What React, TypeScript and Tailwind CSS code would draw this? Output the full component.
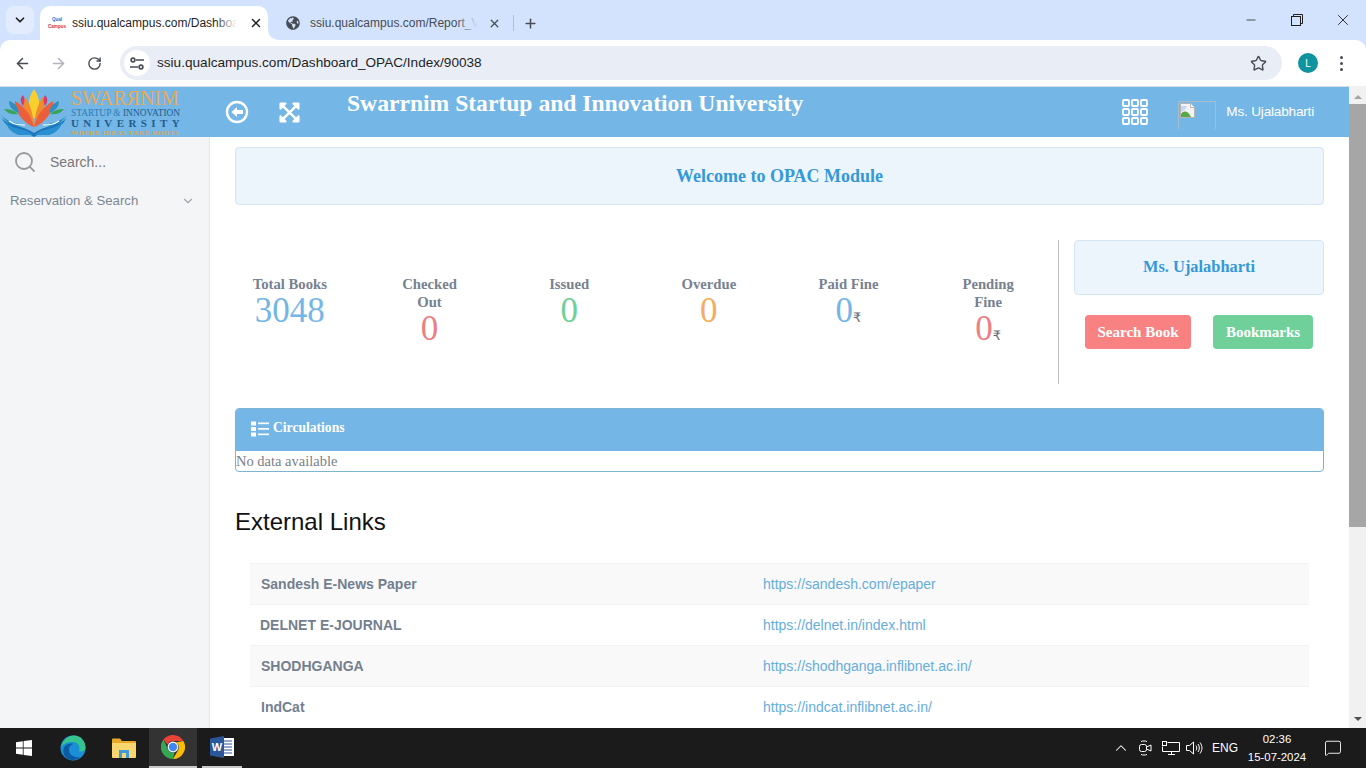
import React from "react";
import { ArrowLeft, ArrowRight, RotateCw, Star, X, Plus, ChevronDown, Search, Minus, ChevronUp, MessageSquare } from "lucide-react";
import { FaExpandArrowsAlt, FaGlobeAmericas } from "react-icons/fa";

const serif = "font-['Liberation_Serif',serif]";

function Lotus() {
  return (
    <svg width="68" height="50" viewBox="1 0 64 50" className="shrink-0">
      <path d="M0 28 C8 36 16 36 22 38 C14 42 8 38 0 28Z" fill="#1e8ecb" />
      <path d="M66 28 C58 36 50 36 44 38 C52 42 58 38 66 28Z" fill="#1e8ecb" />
      <path d="M1 31 C6 44 20 42 33 50 C46 42 60 44 65 31 C58 40 44 38 33 46 C22 38 8 40 1 31Z" fill="#1c75b8" />
      <path d="M4 34 C12 44 24 40 32 48 L18 48 C10 46 6 40 4 34Z" fill="#2a8fd0" />
      <path d="M62 34 C54 44 42 40 34 48 L48 48 C56 46 60 40 62 34Z" fill="#2a8fd0" />
      <path d="M33 2 C26 12 26 22 33 32 C40 22 40 12 33 2Z" fill="#f7d030" />
      <path d="M24 10 C20 20 24 32 33 40 C32 28 30 18 24 10Z" fill="#f28a2e" />
      <path d="M42 10 C46 20 42 32 33 40 C34 28 36 18 42 10Z" fill="#f28a2e" />
      <path d="M14 14 C13 24 22 36 33 40 C30 28 24 20 14 14Z" fill="#ec5f3c" />
      <path d="M52 14 C53 24 44 36 33 40 C36 28 42 20 52 14Z" fill="#ec5f3c" />
      <path d="M22 8 C19 11 19 15 22 19 C24 15 24 11 22 8Z" fill="#d63b6a" />
      <path d="M44 8 C47 11 47 15 44 19 C42 15 42 11 44 8Z" fill="#d63b6a" />
      <path d="M8 14 C8 20 12 24 18 26 C17 20 14 16 8 14Z" fill="#2f8fbd" />
      <path d="M58 14 C58 20 54 24 48 26 C49 20 52 16 58 14Z" fill="#2f8fbd" />
      <path d="M3 22 C7 27 12 28 17 27 C13 23 8 22 3 22Z" fill="#3aa35a" />
      <path d="M63 22 C59 27 54 28 49 27 C53 23 58 22 63 22Z" fill="#3aa35a" />
      <path d="M8 34 C14 38 18 38 24 38 M58 34 C52 38 48 38 42 38" stroke="#fff" strokeWidth="1.2" fill="none" />
    </svg>
  );
}

function GridIcon() {
  const cells = [0, 9, 18];
  return (
    <svg width="26" height="26" viewBox="0 0 26 26">
      {cells.map((y) =>
        cells.map((x) => <rect key={`${x}-${y}`} x={x + 1} y={y + 1} width="6" height="6" rx="1" fill="none" stroke="#fff" strokeWidth="1.8" />)
      )}
    </svg>
  );
}

function BrokenImage() {
  return (
    <svg width="16" height="16" viewBox="0 0 16 16">
      <path d="M.5.5h10l4 4v10H.5z" fill="#f3f3f3" stroke="#b5b5b5" />
      <path d="M10.5.5v4h4" fill="#fff" stroke="#b5b5b5" />
      <path d="M1 14 L1 11 C4 7 8 8 11 14Z" fill="#5aa845" />
      <path d="M1 9 L1 3 L7 3 L5 7Z" fill="#c9d8ee" />
    </svg>
  );
}

function TuneIcon() {
  return (
    <svg width="14" height="13" viewBox="0 0 14 13" fill="none" stroke="#474c55" strokeWidth="1.6">
      <circle cx="3" cy="3" r="1.9" />
      <path d="M6 3H14M0 10H8" />
      <circle cx="11" cy="10" r="1.9" />
    </svg>
  );
}

function Windows() {
  return (
    <svg width="16" height="16" viewBox="0 0 16 16" fill="#fff">
      <path d="M0 2.2 6.8 1.2V7.6H0ZM7.6 1.1 16 0V7.6H7.6ZM0 8.4H6.8V14.8L0 13.8ZM7.6 8.4H16V16L7.6 14.9Z" />
    </svg>
  );
}

function Edge() {
  return (
    <svg width="26" height="26" viewBox="0 0 26 26">
      <circle cx="13" cy="13" r="12.5" fill="#1b8fd6" />
      <path d="M1 12 C3 3 10 .5 14 .5 C21 .5 25.5 6 25.5 13 C25.5 16 22 17 19 16 C21 12 18 7 13 7 C7 7 3 9 1 12Z" fill="#35c48d" />
      <path d="M9 15 C9 20 14 23 20 22 C17 25 12 26 8 24 C3 21 2 15 5 11 C7 9 11 8 13 9 C10 10 9 12 9 15Z" fill="#0c59a4" />
    </svg>
  );
}

function Folder() {
  return (
    <svg width="24" height="20" viewBox="0 0 24 20">
      <path d="M0 1.5A1 1 0 0 1 1 .5H8L10 3H23A1 1 0 0 1 24 4V6H0Z" fill="#e8a928" />
      <path d="M0 5H24V19A1 1 0 0 1 23 20H1A1 1 0 0 1 0 19Z" fill="#f9d76e" />
      <path d="M7 12H17V20H14V15H10V20H7Z" fill="#3d9bd8" />
    </svg>
  );
}

function ChromeLogo() {
  return (
    <svg width="24" height="24" viewBox="0 0 24 24">
      <path d="M12 0A12 12 0 0 1 22.4 6H12A6 6 0 0 0 6.4 9.8L2.5 4.6A12 12 0 0 1 12 0Z" fill="#ea4335" />
      <path d="M22.4 6A12 12 0 0 1 12 24L17.2 15A6 6 0 0 0 16 8H12Z" fill="#fbbc05" />
      <path d="M12 24A12 12 0 0 1 2.5 4.6L7.2 15A6 6 0 0 0 13.5 17.8Z" fill="#34a853" />
      <circle cx="12" cy="12" r="5.4" fill="#fff" />
      <circle cx="12" cy="12" r="4.2" fill="#4285f4" />
    </svg>
  );
}

function Word() {
  return (
    <svg width="24" height="22" viewBox="0 0 24 22">
      <rect x="9" y="2" width="15" height="18" fill="#fff" />
      <path d="M14 5H22M14 8H22M14 11H22M14 14H22M14 17H22" stroke="#2b579a" strokeWidth="1" />
      <path d="M0 2.5 14 0V22L0 19.5Z" fill="#2b579a" />
      <text x="7" y="15" fontSize="11" fontWeight="700" fill="#fff" textAnchor="middle" fontFamily="Liberation Sans">W</text>
    </svg>
  );
}

function Stat({ label, value, color, rupee }: { label: string[]; value: string; color: string; rupee?: boolean }) {
  return (
    <div className="flex flex-col items-center">
      <div className="text-[14.7px] leading-[18px] font-bold text-[#77818f] text-center">
        {label.map((l) => (
          <div key={l}>{l}</div>
        ))}
      </div>
      <div className={`text-[35px] leading-[35px] ${color} flex items-baseline`}>
        {value}
        {rupee && <span className="text-[13px] leading-none text-[#666] font-['DejaVu_Sans',sans-serif]">₹</span>}
      </div>
    </div>
  );
}

const links = [
  ["Sandesh E-News Paper", "https://sandesh.com/epaper", "pl-[11px]"],
  ["DELNET E-JOURNAL", "https://delnet.in/index.html", "pl-[10px]"],
  ["SHODHGANGA", "https://shodhganga.inflibnet.ac.in/", "pl-[11px]"],
  ["IndCat", "https://indcat.inflibnet.ac.in/", "pl-[11px]"],
];

export default function App() {
  return (
    <div className="w-[1366px] h-[768px] flex flex-col overflow-hidden bg-white font-['Liberation_Sans',sans-serif]">
      {/* Tab strip */}
      <div className="h-[40px] bg-[#d3e3fd] flex items-center shrink-0 relative">
        <div className="ml-[6px] w-[28px] h-[28px] rounded-[8px] bg-[#e3ecfc] flex items-center justify-center">
          <ChevronDown size={14} strokeWidth={3} className="text-[#1f1f1f]" />
        </div>
        <div className="ml-[6px] mt-[6px] w-[228px] h-[34px] bg-white rounded-t-[10px] flex items-center relative pl-[8px]">
          <div className="w-[18px] text-[4.6px] leading-[7px] text-center mr-[6px] whitespace-nowrap">
            <div className="text-[#2f6fd0] font-bold">Qual</div>
            <div className="text-[#d8323c] font-bold">Campus</div>
          </div>
          <span className="text-[12px] text-[#1f1f1f] w-[165px] whitespace-nowrap overflow-hidden">ssiu.qualcampus.com/Dashboar</span>
          <div className="absolute left-[175px] top-[6px] w-[22px] h-[22px] bg-gradient-to-r from-transparent to-white" />
          <X size={14} strokeWidth={2.5} className="absolute left-[209px] text-[#1f1f1f]" />
          <svg width="12" height="12" viewBox="0 0 12 12" className="absolute -right-[12px] bottom-0">
            <path d="M0 0C0 8 4 12 12 12H0Z" fill="#fff" />
          </svg>
        </div>
        <div className="ml-[18px] mt-[6px] flex items-center">
          <FaGlobeAmericas size={14} className="text-[#474c55]" />
          <span className="ml-[10px] text-[12px] text-[#474c55] w-[168px] whitespace-nowrap overflow-hidden relative">
            ssiu.qualcampus.com/Report_V
            <span className="absolute right-0 top-0 bottom-0 w-[22px] bg-gradient-to-r from-transparent to-[#d3e3fd]" />
          </span>
          <X size={13} strokeWidth={2.4} className="ml-[10px] text-[#474c55]" />
          <div className="ml-[12px] w-px h-[16px] bg-[#a9bfe2]" />
          <Plus size={15} strokeWidth={2.4} className="ml-[9px] text-[#474c55]" />
        </div>
        <div className="ml-auto flex items-center text-[#1f1f1f]">
          <Minus size={14} strokeWidth={1.3} className="mr-[33px]" />
          <svg width="12" height="12" viewBox="0 0 12 12" className="mr-[31px]" fill="none" stroke="#1f1f1f">
            <rect x=".5" y="2.5" width="9" height="9" />
            <path d="M2.5 2.5V.5H11.5V9.5H9.5" />
          </svg>
          <X size={18} strokeWidth={1.2} className="mr-[14px]" />
        </div>
      </div>

      {/* Toolbar */}
      <div className="h-[46px] bg-[#d3e3fd] shrink-0">
        <div className="h-full bg-white rounded-t-[10px] flex items-center">
          <ArrowLeft size={17} strokeWidth={2.2} className="ml-[14px] text-[#474c55]" />
          <ArrowRight size={17} strokeWidth={2.2} className="ml-[19px] text-[#b1b4ba]" />
          <RotateCw size={15} strokeWidth={2.2} className="ml-[20px] text-[#474c55]" />
          <div className="ml-[18px] w-[1162px] h-[34px] rounded-full bg-[#e9eef6] flex items-center">
            <div className="ml-[4px] w-[26px] h-[26px] rounded-full bg-white flex items-center justify-center">
              <TuneIcon />
            </div>
            <span className="ml-[7px] text-[13.6px] text-[#1f1f1f]">ssiu.qualcampus.com/Dashboard_OPAC/Index/90038</span>
            <Star size={17} strokeWidth={2} className="ml-auto mr-[15px] text-[#474c55]" />
          </div>
          <div className="ml-[16px] w-[20px] h-[20px] rounded-full bg-[#0e939f] text-white text-[10px] flex items-center justify-center">L</div>
          <div className="ml-[22px] flex flex-col gap-[3px]">
            <span className="w-[3px] h-[3px] rounded-full bg-[#474c55]" />
            <span className="w-[3px] h-[3px] rounded-full bg-[#474c55]" />
            <span className="w-[3px] h-[3px] rounded-full bg-[#474c55]" />
          </div>
        </div>
      </div>

      {/* Page */}
      <div className="h-[642px] flex shrink-0">
        <div className="w-[1349px] flex flex-col border-t border-[#d4dde4]">
          <header className="h-[50px] bg-[#74b6e6] flex items-center shrink-0">
            <div className="w-[210px] h-[50px] flex items-center overflow-hidden shrink-0">
              <Lotus />
              <div className="ml-[3px] w-[112px] text-[#2a6f9f] font-['Liberation_Serif',serif] whitespace-nowrap">
                <div className="text-[20px] leading-[20px] text-[#e8a954]">SWARЯNIM</div>
                <div className="text-[9.4px] leading-[10px] text-[#2d7db5]">STARTUP &amp; <span className="text-[#235d8c]">INNOVATION</span></div>
                <div className="text-[11px] leading-[11px] tracking-[4.4px] font-bold text-[#235d8c]">UNIVERSITY</div>
                <div className="text-[7px] leading-[8px] text-[#d9a84e] font-bold tracking-[0.5px]">WHERE IDEAS TAKE ROOTS</div>
              </div>
            </div>
            <svg width="24" height="24" viewBox="0 0 24 24" className="ml-[15px] shrink-0">
              <circle cx="12" cy="12" r="10" fill="none" stroke="#fff" strokeWidth="2.4" />
              <path d="M6.5 12 12 7v3h6v4h-6v3Z" fill="#fff" />
            </svg>
            <FaExpandArrowsAlt size={23} className="ml-[29px] text-white shrink-0" />
            <div className={`ml-[46px] -mt-[16px] text-[23.6px] font-bold text-white whitespace-nowrap ${serif}`}>
              Swarrnim Startup and Innovation University
            </div>
            <div className="ml-auto flex items-center">
              <GridIcon />
              <div className="ml-[30px] w-[38px] h-[28px] mt-[6px] border border-[#a9bccb] border-b-0 pl-[1px] pt-[1px]">
                <BrokenImage />
              </div>
              <span className="ml-[10px] mr-[35px] text-[13.6px] text-white -tracking-[0.2px]">Ms. Ujalabharti</span>
            </div>
          </header>

          <div className="flex flex-1 min-h-0">
            <aside className="w-[210px] bg-[#f4f5f7] border-r border-[#e4e6ea] shrink-0">
              <div className="h-[50px] flex items-center pl-[13px]">
                <Search size={24} strokeWidth={1.8} className="text-[#9a9a9a]" />
                <span className="ml-[13px] text-[14px] text-[#777]">Search...</span>
              </div>
              <div className="flex items-center pl-[10px] pr-[14px] h-[28px]">
                <span className="text-[13.2px] text-[#7b8794]">Reservation &amp; Search</span>
                <ChevronDown size={14} className="ml-auto text-[#a0a7b0]" />
              </div>
            </aside>

            <main className={`w-[1139px] px-[25px] pt-[10px] overflow-hidden ${serif}`}>
              <div className="h-[58px] rounded-[4px] border border-[#d5e5f3] bg-[#edf5fc] flex items-center justify-center text-[18px] font-bold text-[#3498db]">
                Welcome to OPAC Module
              </div>

              <div className="mt-[35px] flex h-[144px]">
                <div className="-ml-[15px] w-[839px] shrink-0 grid grid-cols-6 items-start pt-[35px] border-r border-[#bdbdbd]">
                  <Stat label={["Total Books"]} value="3048" color="text-[#74b6e6]" />
                  <Stat label={["Checked", "Out"]} value="0" color="text-[#ec7f85]" />
                  <Stat label={["Issued"]} value="0" color="text-[#6fd09a]" />
                  <Stat label={["Overdue"]} value="0" color="text-[#f3ae62]" />
                  <Stat label={["Paid Fine"]} value="0" color="text-[#74b6e6]" rupee />
                  <Stat label={["Pending", "Fine"]} value="0" color="text-[#ec7f85]" rupee />
                </div>
                <div className="ml-[15px] w-[250px] shrink-0 flex flex-col">
                  <div className="h-[55px] rounded-[4px] border border-[#d5e5f3] bg-[#edf5fc] flex items-center justify-center text-[16.4px] font-bold text-[#3498db]">
                    Ms. Ujalabharti
                  </div>
                  <div className="mt-[20px] flex pl-[11px]">
                    <div className="w-[106px] h-[34px] rounded-[4px] bg-[#f88181] text-white text-[15px] font-bold flex items-center justify-center">Search Book</div>
                    <div className="ml-[22px] w-[100px] h-[34px] rounded-[4px] bg-[#6fd09a] text-white text-[15px] font-bold flex items-center justify-center">Bookmarks</div>
                  </div>
                </div>
              </div>

              <div className="mt-[24px] h-[64px] rounded-[4px] border border-[#7db4cf] overflow-hidden">
                <div className="h-[43px] -mt-px -mx-px pb-[2px] bg-[#74b6e6] flex items-center pl-[16px] text-white text-[13.6px] font-bold">
                  <svg width="18" height="16" viewBox="0 0 18 16" fill="#fff" className="mr-[4px]">
                    <rect x="0" y="0.5" width="5" height="4" />
                    <rect x="0" y="6" width="5" height="4" />
                    <rect x="0" y="11.5" width="5" height="4" />
                    <rect x="7" y="1.5" width="11" height="1.7" />
                    <rect x="7" y="7" width="11" height="1.7" />
                    <rect x="7" y="12.5" width="11" height="1.7" />
                  </svg>
                  Circulations
                </div>
                <div className="text-[14.5px] leading-[21px] text-[#7b8088]">No data available</div>
              </div>

              <h2 className="mt-[36px] text-[24px] leading-[28px] text-[#111] font-['Liberation_Sans',sans-serif]">External Links</h2>

              <div className="mt-[27px] mx-[15px] font-['Liberation_Sans',sans-serif] text-[14px]">
                {links.map(([name, url, pad], i) => (
                  <div key={name} className={`h-[41px] flex items-center border-t border-[#f2f2f2] ${i % 2 === 0 ? "bg-[#f9f9f9]" : "bg-white"}`}>
                    <div className={`w-[513px] font-bold text-[#737f90] ${pad}`}>{name}</div>
                    <div className="text-[#66addd]">{url}</div>
                  </div>
                ))}
              </div>
            </main>
          </div>
        </div>

        {/* Scrollbar */}
        <div className="w-[17px] bg-[#f1f1f1] flex flex-col items-center shrink-0">
          <div className="h-[18px] flex items-center justify-center pt-[3px]">
            <div className="w-0 h-0 border-x-[4px] border-x-transparent border-b-[4px] border-b-[#a3a3a3]" />
          </div>
          <div className="w-full h-[423px] bg-[#a6a6a6]" />
          <div className="mt-auto h-[18px] flex items-center justify-center">
            <div className="w-0 h-0 border-x-[4px] border-x-transparent border-t-[4px] border-t-[#505050]" />
          </div>
        </div>
      </div>

      {/* Taskbar */}
      <div className="h-[40px] bg-[#1b1b1b] flex items-center shrink-0 text-white">
        <div className="w-[48px] flex justify-center"><Windows /></div>
        <div className="w-[50px] flex justify-center"><Edge /></div>
        <div className="w-[51px] flex justify-center"><Folder /></div>
        <div className="w-[48px] h-full bg-[#333333] border-b-2 border-[#c8c8c8] flex items-center justify-center"><ChromeLogo /></div>
        <div className="ml-[5px] w-[40px] h-full border-b-2 border-[#c8c8c8] flex items-center justify-center"><Word /></div>
        <div className="ml-auto flex items-center">
          <ChevronUp size={18} strokeWidth={1.4} className="mr-[8px]" />
          <svg width="14" height="16" viewBox="0 0 14 16" fill="none" stroke="#fff" strokeWidth="1" className="mr-[10px]">
            <rect x="1.5" y="4.5" width="7" height="7" rx="2" />
            <path d="M8.5 7 13 5v6L8.5 9M3 1.5C5 .8 7 .8 9 1.5M3 14.5c2 .7 4 .7 6 0" />
          </svg>
          <svg width="18" height="14" viewBox="0 0 18 14" fill="none" stroke="#fff" strokeWidth="1" className="mr-[6px]">
            <path d="M5.5 1.5H17.5V10.5H.5V5.5M6 13.5H13M9.5 10.5V13.5" />
            <rect x=".5" y=".5" width="4" height="4" />
          </svg>
          <svg width="17" height="14" viewBox="0 0 17 14" fill="none" stroke="#fff" strokeWidth="1" className="mr-[9px]">
            <path d="M.5 4.5H3.5L7.5 1V13L3.5 9.5H.5ZM10 4.5C11 6 11 8 10 9.5M12 3C13.8 5.5 13.8 8.5 12 11M14 1.5C16.6 5 16.6 9 14 12.5" />
          </svg>
          <span className="text-[12px] mr-[4px] w-[23px] whitespace-nowrap">ENG</span>
          <div className="text-[11.4px] leading-[18px] text-center whitespace-nowrap mr-[9px] w-[76px]">
            <div>02:36</div>
            <div>15-07-2024</div>
          </div>
          <MessageSquare size={18} strokeWidth={1.2} className="mr-[24px]" />
        </div>
      </div>
    </div>
  );
}
